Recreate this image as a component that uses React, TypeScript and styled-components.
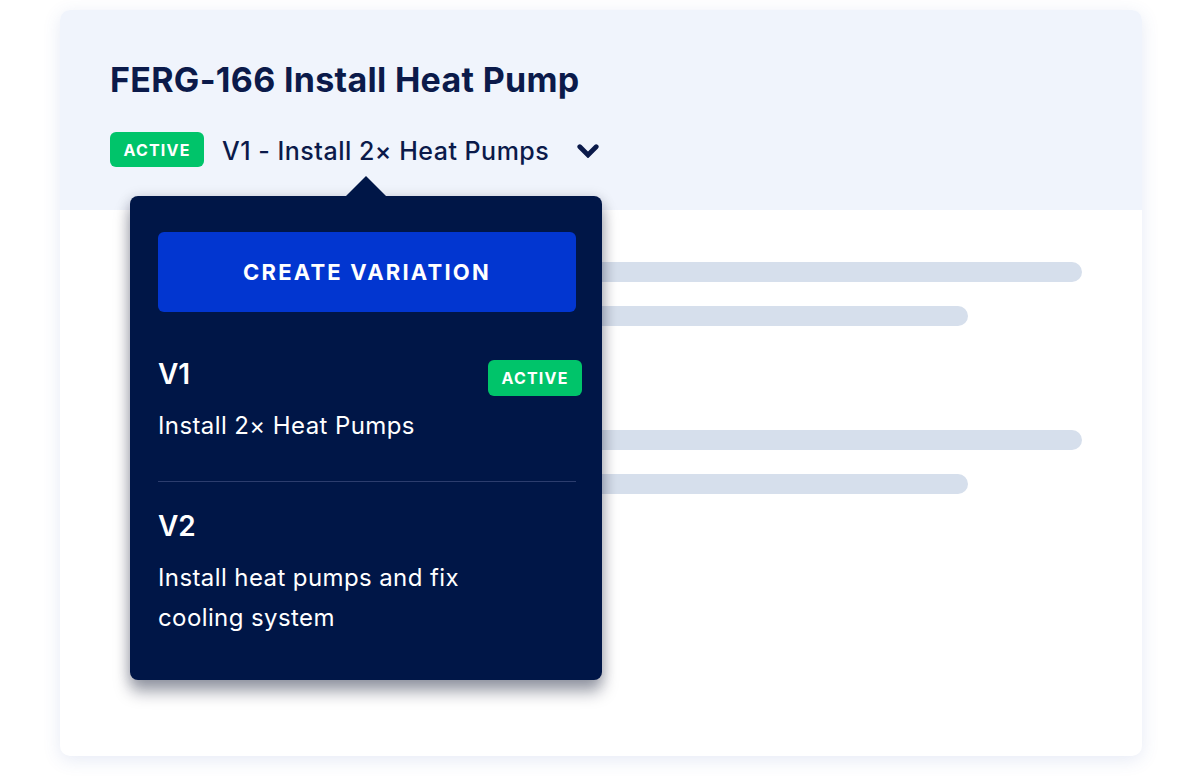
import styled, { createGlobalStyle } from "styled-components";

const colors = {
  navy: "#001647",
  title: "#0b1a4a",
  headerBg: "#f0f4fc",
  bar: "#d6dfec",
  green: "#00c46a",
  blue: "#0236d0",
  divider: "#2c3d6e",
};

const GlobalStyle = createGlobalStyle`
  html, body {
    margin: 0;
    padding: 0;
    background: #ffffff;
    font-family: Inter, "Noto Sans", "Liberation Sans", sans-serif;
  }
  * { box-sizing: border-box; }
`;

const Page = styled.div`
  width: 1200px;
  height: 778px;
  padding: 10px 58px 0 60px;
`;

const Card = styled.div`
  position: relative;
  width: 1082px;
  height: 746px;
  background: #ffffff;
  border-radius: 10px;
  box-shadow: 0 4px 18px rgba(60, 90, 180, 0.13);
`;

const Header = styled.div`
  background: ${colors.headerBg};
  border-radius: 10px 10px 0 0;
  padding: 50px 50px 43px;
  height: 200px;
`;

const Title = styled.h1`
  margin: 0;
  font-size: 34px;
  line-height: 40px;
  font-weight: 700;
  color: ${colors.title};
  letter-spacing: 0.3px;
`;

const VersionRow = styled.div`
  display: flex;
  align-items: center;
  margin-top: 32px;
  height: 35px;
`;

const Badge = styled.span`
  display: inline-flex;
  align-items: center;
  justify-content: center;
  width: 94px;
  height: 35px;
  border-radius: 6px;
  background: ${colors.green};
  color: #ffffff;
  font-size: 16px;
  font-weight: 700;
  letter-spacing: 1.2px;
`;

const MenuBadge = styled(Badge)`
  align-self: flex-start;
  height: 36px;
  margin: 4px -8px 0 0;
`;

const VersionLabel = styled.span`
  margin: 3px 0 0 18px;
  font-size: 25px;
  font-weight: 500;
  letter-spacing: 0.5px;
  color: ${colors.title};
`;

const Chevron = styled.svg`
  margin: 2px 0 0 28px;
  width: 22px;
  height: 14px;
`;

const Body = styled.div`
  padding: 52px 60px 0 70px;
  display: flex;
  flex-direction: column;
  gap: 104px;
`;

const BarGroup = styled.div`
  display: flex;
  flex-direction: column;
  gap: 24px;
`;

const Bar = styled.div<{ $width: number }>`
  height: 20px;
  width: ${(p) => p.$width}px;
  border-radius: 10px;
  background: ${colors.bar};
`;

const Popover = styled.div`
  position: absolute;
  left: 70px;
  top: 186px;
  width: 472px;
  height: 484px;
  padding: 36px 26px 0 28px;
  background: ${colors.navy};
  border-radius: 8px;
  box-shadow: 0 12px 16px rgba(0, 10, 40, 0.36), 0 2px 14px rgba(0, 10, 40, 0.18);
  color: #ffffff;
  z-index: 2;
`;

const Arrow = styled.div`
  position: absolute;
  left: 216px;
  top: -20px;
  width: 0;
  height: 0;
  border-left: 20px solid transparent;
  border-right: 20px solid transparent;
  border-bottom: 20px solid ${colors.navy};
`;

const CreateButton = styled.button`
  display: block;
  width: 100%;
  height: 80px;
  border: none;
  border-radius: 6px;
  background: ${colors.blue};
  color: #ffffff;
  font-family: inherit;
  font-size: 22px;
  font-weight: 700;
  letter-spacing: 2.2px;
  margin-bottom: 18px;
  cursor: pointer;
`;

const Item = styled.div<{ $last?: boolean }>`
  padding: 26px 2px ${(p) => (p.$last ? "0" : "35px")} 0;
  border-bottom: ${(p) => (p.$last ? "none" : `1px solid ${colors.divider}`)};
`;

const ItemHead = styled.div`
  display: flex;
  justify-content: space-between;
  height: 36px;
`;

const ItemName = styled.div`
  font-size: 28px;
  line-height: 36px;
  font-weight: 600;
`;

const ItemDesc = styled.div`
  margin-top: 14px;
  max-width: 330px;
  font-size: 24px;
  line-height: 40px;
  font-weight: 400;
  letter-spacing: 0.4px;
`;

const variations = [
  { name: "V1", desc: "Install 2× Heat Pumps", active: true },
  { name: "V2", desc: "Install heat pumps and fix cooling system", active: false },
];

export default function App() {
  return (
    <>
      <GlobalStyle />
      <Page>
        <Card>
          <Header>
            <Title>FERG-166 Install Heat Pump</Title>
            <VersionRow>
              <Badge>ACTIVE</Badge>
              <VersionLabel>V1 - Install 2× Heat Pumps</VersionLabel>
              <Chevron viewBox="0 0 22 14">
                <path
                  d="M2.8 2.8 L11 11 L19.2 2.8"
                  fill="none"
                  stroke={colors.title}
                  strokeWidth="4.8"
                  strokeLinecap="round"
                  strokeLinejoin="miter"
                />
              </Chevron>
            </VersionRow>
          </Header>
          <Body>
            <BarGroup>
              <Bar $width={952} />
              <Bar $width={838} />
            </BarGroup>
            <BarGroup>
              <Bar $width={952} />
              <Bar $width={838} />
            </BarGroup>
          </Body>
          <Popover>
            <Arrow />
            <CreateButton>CREATE VARIATION</CreateButton>
            {variations.map((v, i) => (
              <Item key={v.name} $last={i === variations.length - 1}>
                <ItemHead>
                  <ItemName>{v.name}</ItemName>
                  {v.active && <MenuBadge>ACTIVE</MenuBadge>}
                </ItemHead>
                <ItemDesc>{v.desc}</ItemDesc>
              </Item>
            ))}
          </Popover>
        </Card>
      </Page>
    </>
  );
}
